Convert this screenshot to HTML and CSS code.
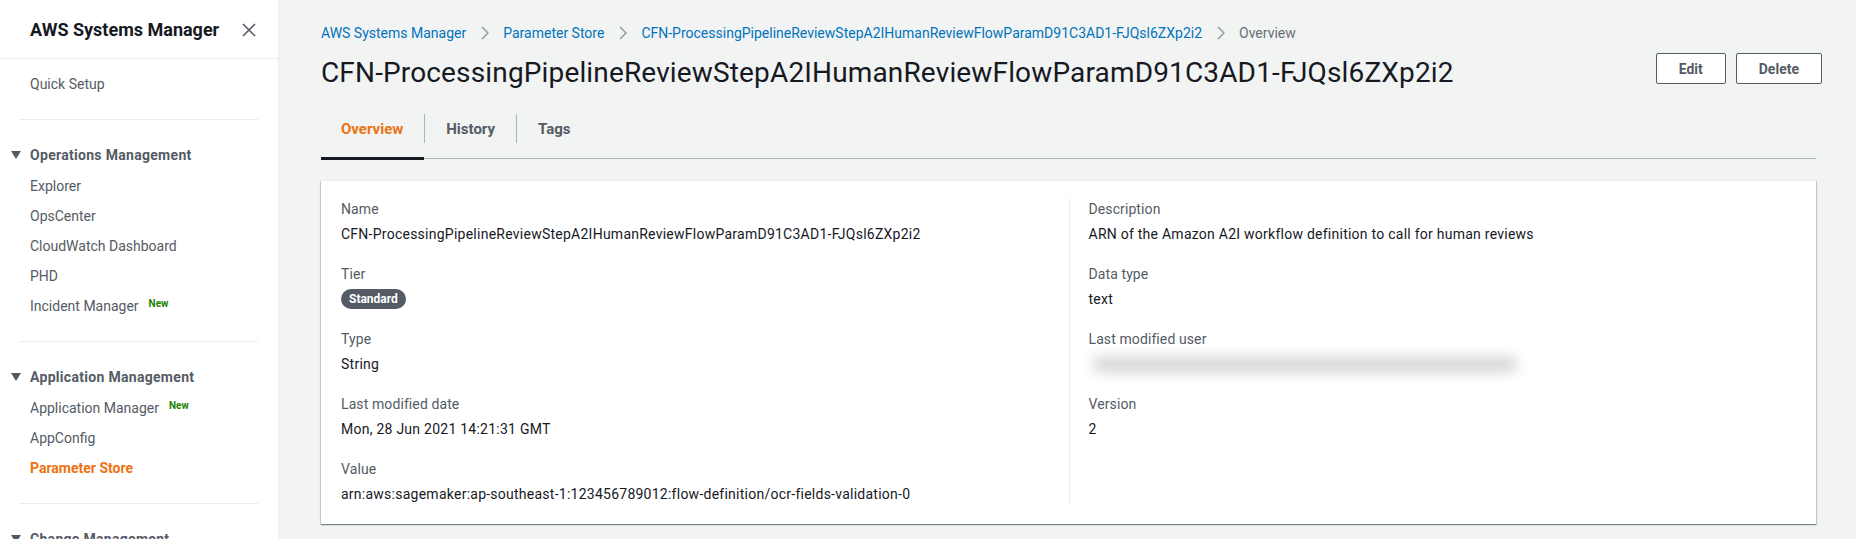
FILE: index.html
```html
<!DOCTYPE html>
<html lang="en">
<head>
<meta charset="utf-8">
<title>Parameter Store</title>
<link rel="stylesheet" href="styles.css">
</head>
<body>
<div class="app">
  <aside class="sidebar">
    <div class="side-head">
      <span class="side-title">AWS Systems Manager</span>
      <svg class="close" width="14" height="14" viewBox="0 0 14 14"><path d="M1 1 L13 13 M13 1 L1 13" stroke="#545b64" stroke-width="1.6" fill="none"/></svg>
    </div>
    <nav class="side-nav">
      <a class="nav-item">Quick Setup</a>
      <div class="divider"></div>
      <div class="nav-section"><span class="caret"></span>Operations Management</div>
      <a class="nav-item">Explorer</a>
      <a class="nav-item">OpsCenter</a>
      <a class="nav-item">CloudWatch Dashboard</a>
      <a class="nav-item">PHD</a>
      <a class="nav-item">Incident Manager<sup class="new">New</sup></a>
      <div class="divider"></div>
      <div class="nav-section"><span class="caret"></span>Application Management</div>
      <a class="nav-item">Application Manager<sup class="new">New</sup></a>
      <a class="nav-item">AppConfig</a>
      <a class="nav-item active">Parameter Store</a>
      <div class="divider"></div>
      <div class="nav-section"><span class="caret"></span>Change Management</div>
    </nav>
  </aside>
  <main class="main">
    <div class="breadcrumbs">
      <a class="crumb">AWS Systems Manager</a>
      <span class="sep"><svg width="8" height="14" viewBox="0 0 8 14"><path d="M1 1 L7 7 L1 13" stroke="#879596" stroke-width="1.3" fill="none"/></svg></span>
      <a class="crumb">Parameter Store</a>
      <span class="sep"><svg width="8" height="14" viewBox="0 0 8 14"><path d="M1 1 L7 7 L1 13" stroke="#879596" stroke-width="1.3" fill="none"/></svg></span>
      <a class="crumb">CFN-ProcessingPipelineReviewStepA2IHumanReviewFlowParamD91C3AD1-FJQsl6ZXp2i2</a>
      <span class="sep"><svg width="8" height="14" viewBox="0 0 8 14"><path d="M1 1 L7 7 L1 13" stroke="#879596" stroke-width="1.3" fill="none"/></svg></span>
      <span class="crumb-current">Overview</span>
    </div>
    <div class="page-head">
      <h1 class="title">CFN-ProcessingPipelineReviewStepA2IHumanReviewFlowParamD91C3AD1-FJQsl6ZXp2i2</h1>
      <div class="actions">
        <button class="btn">Edit</button>
        <button class="btn">Delete</button>
      </div>
    </div>
    <div class="tabs">
      <div class="tab active"><span class="tab-label">Overview</span></div>
      <div class="tab"><span class="tab-label">History</span></div>
      <div class="tab"><span class="tab-label">Tags</span></div>
    </div>
    <section class="card">
      <div class="col">
        <div class="field"><div class="label">Name</div><div class="value">CFN-ProcessingPipelineReviewStepA2IHumanReviewFlowParamD91C3AD1-FJQsl6ZXp2i2</div></div>
        <div class="field"><div class="label">Tier</div><div class="value badge-row"><span class="badge">Standard</span></div></div>
        <div class="field"><div class="label">Type</div><div class="value">String</div></div>
        <div class="field"><div class="label">Last modified date</div><div class="value">Mon, 28 Jun 2021 14:21:31 GMT</div></div>
        <div class="field"><div class="label">Value</div><div class="value">arn:aws:sagemaker:ap-southeast-1:123456789012:flow-definition/ocr-fields-validation-0</div></div>
      </div>
      <div class="col col-right">
        <div class="field"><div class="label">Description</div><div class="value">ARN of the Amazon A2I workflow definition to call for human reviews</div></div>
        <div class="field"><div class="label">Data type</div><div class="value">text</div></div>
        <div class="field"><div class="label">Last modified user</div><div class="value"><div class="blurred"></div></div></div>
        <div class="field"><div class="label">Version</div><div class="value">2</div></div>
      </div>
    </section>
  </main>
</div>
</body>
</html>
```

FILE: styles.css
```css
* { box-sizing: border-box; }
html, body { margin: 0; padding: 0; }
body {
  font-family: Roboto, "Liberation Sans", sans-serif;
  font-size: 14px;
  line-height: 22px;
  color: #16191f;
  background: #f2f3f3;
}
.app { display: flex; min-height: 539px; }

.sidebar {
  width: 279px;
  flex: none;
  background: #fff;
  border-right: 1px solid #eaeded;
}
.side-head {
  display: flex;
  align-items: center;
  justify-content: space-between;
  padding: 19px 22px 17px 30px;
  border-bottom: 1px solid #eaeded;
}
.side-title { font-size: 18px; font-weight: 700; color: #16191f; }
.close { display: block; }
.side-nav { display: flex; flex-direction: column; padding-top: 10px; }
.nav-item {
  display: block;
  padding: 4px 20px 4px 30px;
  color: #545b64;
}
.nav-item.active { color: #ec7211; font-weight: 700; }
.new {
  font-size: 10px;
  font-weight: 700;
  color: #1d8102;
  margin-left: 10px;
  vertical-align: 4px;
  line-height: 0;
}
.divider { height: 1px; background: #eaeded; margin: 20px 20px 20px 19px; }
.nav-section {
  display: flex;
  align-items: center;
  padding: 4px 20px 5px 11px;
  font-weight: 700;
  letter-spacing: 0.3px;
  color: #545b64;
}
.caret {
  width: 0; height: 0;
  border-left: 5px solid transparent;
  border-right: 5px solid transparent;
  border-top: 8px solid #545b64;
  margin-right: 9px;
}

.main { flex: 1; padding: 22px 40px 0 42px; min-width: 0; }
.breadcrumbs { display: flex; align-items: center; }
.crumb { color: #0073bb; }
.crumb-current { color: #687078; }
.sep { display: flex; align-items: center; padding: 0 14px 0 15px; }
.page-head {
  display: flex;
  justify-content: space-between;
  align-items: flex-start;
  margin-top: 11px;
}
.title {
  margin: 0;
  font-size: 28px;
  line-height: 36px;
  font-weight: 400;
  letter-spacing: 0.15px;
  color: #16191f;
}
.actions { display: flex; gap: 10px; margin-top: -2px; margin-right: -6px; }
.btn {
  font-family: inherit;
  font-size: 14px;
  font-weight: 700;
  color: #545b64;
  background: #fff;
  border: 1px solid #545b64;
  border-radius: 2px;
  height: 31px;
  padding: 0 22px;
}
.tabs {
  display: flex;
  margin-top: 23px;
  border-bottom: 1px solid #aab7b8;
}
.tab { position: relative; padding-bottom: 15px; }
.tab-label {
  display: block;
  padding: 4px 21px 3px;
  font-weight: 700;
  font-size: 15px;
  color: #545b64;
}
.tab:first-child .tab-label { padding-left: 20px; }
.tab + .tab .tab-label { border-left: 1px solid #aab7b8; }
.tab.active .tab-label { color: #ec7211; }
.tab.active::after {
  content: "";
  position: absolute;
  left: 0; right: 0; bottom: -2px;
  height: 3px;
  background: #16191f;
}

.card {
  margin-top: 21px;
  background: #fff;
  display: grid;
  grid-template-columns: 1fr 1fr;
  padding: 17px 20px 19px;
  box-shadow: 0 1px 1px 0 rgba(0,28,36,.3), 1px 1px 1px 0 rgba(0,28,36,.15), -1px 1px 1px 0 rgba(0,28,36,.15);
  border-top: 1px solid #eaeded;
}
.col-right { border-left: 1px solid #eaeded; padding-left: 19px; }
.field { margin-bottom: 18px; }
.field:last-child { margin-bottom: 0; }
.label { color: #545b64; margin-bottom: 3px; letter-spacing: 0.1px; }
.value { color: #16191f; letter-spacing: 0.25px; }
.badge-row { height: 22px; display: flex; align-items: center; letter-spacing: 0; }
.badge {
  display: inline-block;
  background: #545b64;
  color: #fff;
  font-size: 12px;
  font-weight: 700;
  line-height: 20px;
  padding: 0 8px;
  border-radius: 10px;
}
.blurred {
  width: 432px;
  height: 22px;
  position: relative;
}
.blurred::before {
  content: "";
  position: absolute;
  left: 4px; right: 4px; top: 4px; height: 15px;
  background: #d2d2d2;
  filter: blur(7px);
  border-radius: 7px;
}
```
